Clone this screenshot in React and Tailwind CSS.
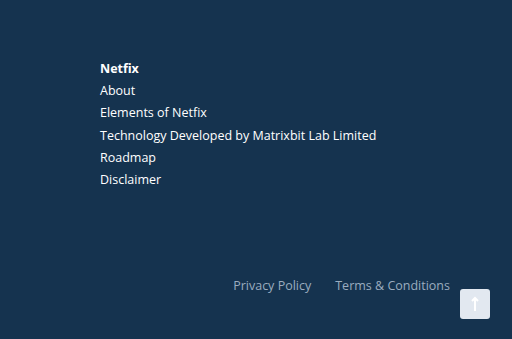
export default function App() {
  return (
    <div className="relative h-[339px] w-full bg-[#15334f] font-['Open_Sans',sans-serif] text-[12.5px] text-white">
      <div className="pl-[100px] pt-[58px]">
        <h4 className="font-bold leading-[22px]">Netfix</h4>
        <ul className="leading-[22.3px]">
          <li>About</li>
          <li>Elements of Netfix</li>
          <li>Technology Developed by Matrixbit Lab Limited</li>
          <li>Roadmap</li>
          <li>Disclaimer</li>
        </ul>
      </div>
      <div className="mt-[86px] flex justify-end gap-[24px] pr-[62px] text-[#9aacbf]">
        <a>Privacy Policy</a>
        <a>Terms &amp; Conditions</a>
      </div>
      <button className="absolute right-[22px] bottom-[20px] flex h-[30px] w-[30px] items-center justify-center rounded-[3px] bg-[#e2e8f0]">
        <svg width="8" height="16" viewBox="0 0 8 16" fill="none" stroke="white" strokeWidth="2">
          <path d="M4 15V2M1 5l3-3 3 3" />
        </svg>
      </button>
    </div>
  );
}
